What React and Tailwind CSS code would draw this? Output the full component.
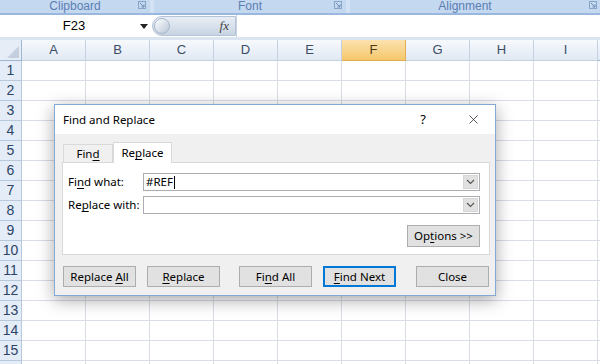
import { X } from "lucide-react";

const cols = ["A", "B", "C", "D", "E", "F", "G", "H", "I"];
const rows = Array.from({ length: 16 }, (_, i) => i + 1);

function U({ children }) {
    return <span className="underline underline-offset-2">{children}</span>;
}

function Chevron() {
    return (
        <svg width="9" height="6" viewBox="0 0 9 6" fill="none">
            <path d="M1 1 L4.5 4.5 L8 1" stroke="#555" strokeWidth="1.1" />
        </svg>
    );
}

function Launcher() {
    return (
        <svg width="8" height="8" viewBox="0 0 8 8" className="opacity-70">
            <rect x="0.5" y="0.5" width="7" height="7" fill="none" stroke="#6f8fb8" />
            <path d="M2 2 L6 6 M6 3.5 V6 H3.5" stroke="#4a6d9c" fill="none" />
        </svg>
    );
}

function Btn({ children, primary, className = "" }) {
    return (
        <button className={`h-[21px] w-[73px] bg-[#e1e1e1] text-[11.5px] text-black ${primary ? "border-2 border-[#0078d7]" : "border border-[#adadad]"} ${className}`}>
            {children}
        </button>
    );
}

function Combo({ value }) {
    return (
        <div className="flex h-[18px] flex-1 border border-[#abadb3] bg-white">
            <div className="flex flex-1 items-center pl-[2px] text-[11.5px] text-black leading-none">
                {value}
                {value && <span className="ml-[1px] inline-block h-[13px] w-px bg-black" />}
            </div>
            <div className="m-[1px] flex w-[15px] items-center justify-center bg-[#e1e1e1] border border-[#d6d6d6]">
                <Chevron />
            </div>
        </div>
    );
}

export default function App() {
    return (
        <div className="relative h-[364px] w-[600px] overflow-hidden bg-white" style={{ fontFamily: "'Liberation Sans', Arial, sans-serif" }}>
            {/* ribbon group labels */}
            <div className="flex h-[13px] gap-[4px] bg-[#d3e2f4] text-[12px] leading-[12px] text-[#5b7fb3]">
                <div className="relative flex w-[150px] justify-center bg-[#c4d8f0]">
                    Clipboard
                    <span className="absolute right-[4px] top-[1px]"><Launcher /></span>
                </div>
                <div className="relative flex w-[192px] justify-center bg-[#c4d8f0]">
                    Font
                    <span className="absolute right-[4px] top-[1px]"><Launcher /></span>
                </div>
                <div className="relative flex flex-1 justify-center bg-[#c4d8f0] pr-[20px]">
                    Alignment
                    <span className="absolute right-[3px] top-[1px]"><Launcher /></span>
                </div>
            </div>
            <div className="h-[2px] bg-[#9ab7de]" />

            {/* formula bar */}
            <div className="flex h-[22px] items-center bg-white">
                <div className="flex w-[152px] items-center text-[13px] text-black">
                    <span className="flex-1 pl-[8px] text-center">F23</span>
                    <svg width="8" height="5" viewBox="0 0 8 5" className="mr-[4px]"><path d="M0 0 H8 L4 5 Z" fill="#222" /></svg>
                </div>
                <div className="flex h-[20px] w-[84px] items-center rounded-l-full bg-gradient-to-b from-[#e9eef5] to-[#c8d4e3] border border-[#b4c4d8]">
                    <div className="ml-[1px] h-[16px] w-[16px] rounded-full bg-gradient-to-br from-white to-[#b9c7d8] border border-[#a8b8cc]" />
                    <span className="ml-auto mr-[6px] text-[13px] italic text-[#444]" style={{ fontFamily: "'Liberation Serif', serif" }}>fx</span>
                </div>
                <div className="h-full flex-1 border-l border-[#c9d4e2] bg-white" />
            </div>
            <div className="h-[3px] bg-[#dbe5f2]" />

            {/* sheet grid */}
            <div className="grid grid-cols-[22px_repeat(9,64px)_1fr]">
                <div className="relative h-[21px] border-b border-r border-[#9eb6ce] bg-[#e6edf7]">
                    <svg width="12" height="12" viewBox="0 0 12 12" className="absolute bottom-[2px] right-[2px]"><path d="M12 0 V12 H0 Z" fill="#c3cfde" /></svg>
                </div>
                {cols.map((c) => (
                    <div
                        key={c}
                        className={`flex h-[21px] items-center justify-center border-b border-r text-[13px] ${c === "F" ? "border-[#e0ad55] bg-gradient-to-b from-[#fbe2ad] to-[#f5c76a] text-[#4a3a1a]" : "border-[#c3d1e1] bg-gradient-to-b from-[#f7f9fc] to-[#e1e9f4] text-[#3b4d66]"}`}
                    >
                        {c}
                    </div>
                ))}
                <div className="h-[21px] border-b border-[#9eb6ce] bg-gradient-to-b from-[#f7f9fc] to-[#e1e9f4]" />
                {rows.map((r) => [
                    <div key={`h${r}`} className="flex h-[20px] items-center justify-center border-b border-r border-[#b9c9dc] bg-[#e4ecf7] text-[14px] text-[#2c4466]">
                        {r < 16 ? r : ""}
                    </div>,
                    ...cols.map((c) => <div key={`${c}${r}`} className="h-[20px] border-b border-r border-[#d8dde6]" />),
                    <div key={`z${r}`} className="h-[20px] border-b border-[#d8dde6]" />,
                ])}
            </div>

            {/* Find and Replace dialog */}
            <div
                className="absolute left-[54px] top-[104px] flex h-[192px] w-[442px] flex-col border border-[#83a9d6] bg-[#f0f0f0] shadow-[0_4px_16px_rgba(0,0,0,0.35)]"
                style={{ fontFamily: "'Noto Sans', 'Open Sans', sans-serif" }}
            >
                <div className="flex h-[29px] items-center bg-white pl-[8px] text-[11.5px] text-black">
                    <span>Find and Replace</span>
                    <span className="ml-auto mr-[40px] text-[13px]">?</span>
                    <X size={15} strokeWidth={1.2} className="mr-[14px] text-[#222]" />
                </div>

                <div className="flex flex-1 flex-col pl-[7px] pr-[5px] pt-[8px]">
                    <div className="flex items-end pl-[1px]">
                        <div className="flex h-[18px] w-[50px] items-center justify-center border border-b-0 border-[#d9d9d9] bg-[#f0f0f0] text-[11.5px] text-black">
                            Fin<U>d</U>
                        </div>
                        <div className="relative z-10 -mb-px flex h-[21px] w-[59px] items-center justify-center border border-b-0 border-[#d9d9d9] bg-white text-[11.5px] text-black">
                            Re<U>p</U>lace
                        </div>
                    </div>
                    <div className="flex h-[93px] flex-col border border-[#d9d9d9] bg-white pl-[5px] pr-[9px] pt-[10px]">
                        <div className="flex items-center">
                            <span className="w-[75px] text-[11.5px] text-black">Fi<U>n</U>d what:</span>
                            <Combo value="#REF" />
                        </div>
                        <div className="mt-[5px] flex items-center">
                            <span className="w-[75px] text-[11.5px] text-black">Re<U>p</U>lace with:</span>
                            <Combo value="" />
                        </div>
                        <div className="mt-[11px] flex justify-end">
                            <button className="h-[22px] w-[73px] border border-[#adadad] bg-[#e1e1e1] text-[11.5px] text-black">
                                Op<U>t</U>ions &gt;&gt;
                            </button>
                        </div>
                    </div>

                    <div className="mt-[11px] flex pl-[1px]">
                        <Btn>Replace <U>A</U>ll</Btn>
                        <Btn className="ml-[11px]"><U>R</U>eplace</Btn>
                        <Btn className="ml-[19px]">Fi<U>n</U>d All</Btn>
                        <Btn primary className="ml-[11px]"><U>F</U>ind Next</Btn>
                        <Btn className="ml-[20px]">Close</Btn>
                    </div>
                </div>
            </div>
        </div>
    );
}
